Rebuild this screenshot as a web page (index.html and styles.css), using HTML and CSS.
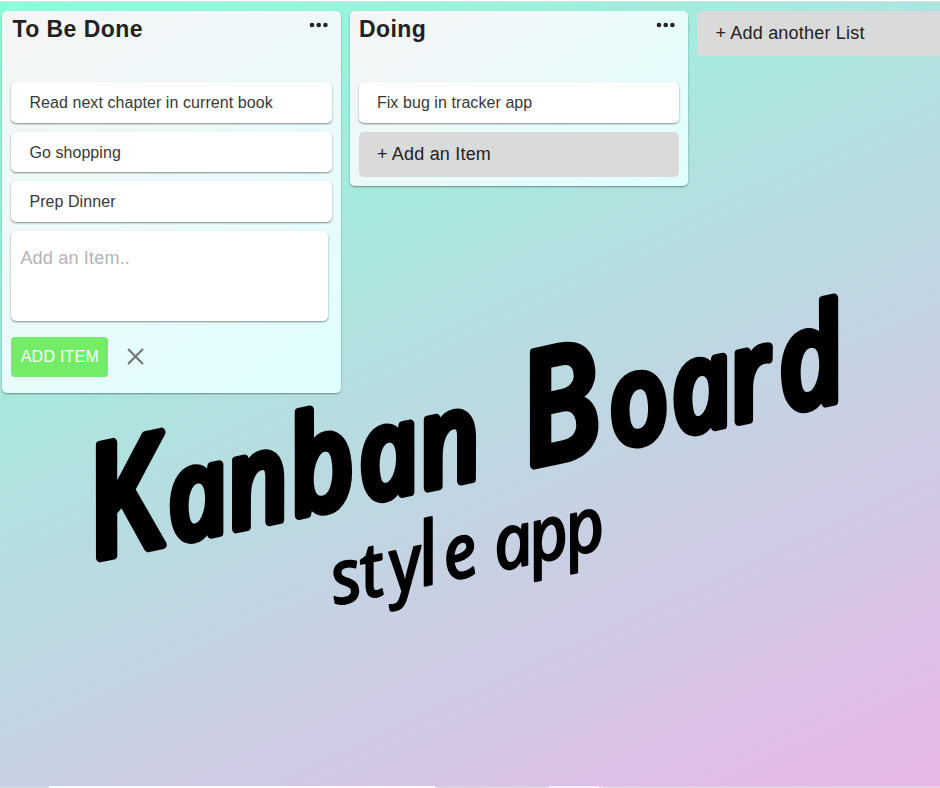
FILE: index.html
```html
<!DOCTYPE html>
<html lang="en">
<head>
<meta charset="utf-8">
<title>Kanban Board</title>
<link rel="stylesheet" href="styles.css">
</head>
<body>
<main class="board">
  <section class="list">
    <header class="list-header"><h2>To Be Done</h2><svg class="dots" viewBox="0 0 20 6"><circle cx="3" cy="3" r="2.3"/><circle cx="9.7" cy="3" r="2.3"/><circle cx="16.4" cy="3" r="2.3"/></svg></header>
    <div class="card">Read next chapter in current book</div>
    <div class="card">Go shopping</div>
    <div class="card">Prep Dinner</div>
    <div class="entry">Add an Item..</div>
    <div class="actions"><button class="add">ADD ITEM</button><svg class="close" viewBox="0 0 16 16"><path d="M1 1 15 15M15 1 1 15"/></svg></div>
  </section>
  <section class="list doing">
    <header class="list-header"><h2>Doing</h2><svg class="dots" viewBox="0 0 20 6"><circle cx="3" cy="3" r="2.3"/><circle cx="9.7" cy="3" r="2.3"/><circle cx="16.4" cy="3" r="2.3"/></svg></header>
    <div class="card">Fix bug in tracker app</div>
    <div class="new">+ Add an Item</div>
  </section>
  <div class="new new-list">+ Add another List</div>
</main>
<svg class="title" viewBox="0 0 940 788">
  <g class="name">
    <text transform="translate(90 560) skewY(-12) scale(.82 1) skewX(12)" x="6 102 175 251 335 409">K<tspan class="low">an</tspan><tspan class="tall">b</tspan><tspan class="low">an</tspan></text>
    <text transform="translate(516 469) skewY(-12) scale(.82 1) skewX(12)" x="16 121 197 268 328">B<tspan class="low">oar</tspan><tspan class="tall">d</tspan></text>
  </g>
  <g class="sub">
    <text transform="translate(334 605) skewY(-12) scale(.88 1) skewX(12)" x="2 35 68 101 129">st<tspan>y</tspan><tspan class="stem">l</tspan>e</text>
    <text transform="translate(497 571) skewY(-12) scale(.88 1) skewX(12)" x="1 41 82">app</text>
  </g>
</svg>
<footer class="taskbar"><i class="search"></i><i class="task"></i><i class="tick"></i></footer>
</body>
</html>
```
FILE: styles.css
```css
* { box-sizing: border-box; }
body {
  margin: 0;
  height: 788px;
  overflow: hidden;
  display: flex;
  flex-direction: column;
  font-family: "Liberation Sans", Arial, sans-serif;
  color: #222;
  background: linear-gradient(155deg, #8affdb, #e9b7e7);
  border-top: 1px solid #fff;
}
.board {
  flex: 1;
  display: flex;
  align-items: flex-start;
  gap: 9px;
  padding: 9.4px 0 0 2.4px;
  border-top: 1px solid #d3e5e0;
}
.list {
  flex: none;
  width: 338.5px;
  height: 382px;
  padding: 0 9px;
  border-radius: 5px;
  background: linear-gradient(145deg, #f6f5f6, #e0ffff);
  box-shadow: 0 1px 2px rgba(0, 0, 0, .4);
}
.doing { height: 174.5px; }
.list-header { height: 71px; display: flex; justify-content: space-between; }
h2 { margin: 5px 0 0 1px; font-size: 23px; line-height: 26px; letter-spacing: .45px; }
.doing h2 { margin-left: 0; }
.dots { width: 20px; height: 6px; margin: 10.5px 3px 0 0; fill: #222; }
.card {
  height: 40.5px;
  margin-bottom: 9px;
  padding-left: 18px;
  border-radius: 5px;
  background: #fff;
  box-shadow: 0 1px 2px rgba(0, 0, 0, .45);
  font-size: 16px;
  line-height: 42px;
  letter-spacing: .07px;
  color: #383838;
}
.entry {
  width: 317px;
  height: 90px;
  padding: 17px 9px;
  border-radius: 5px;
  background: #fff;
  box-shadow: 0 1px 2px rgba(0, 0, 0, .45);
  font-size: 18px;
  line-height: 21px;
  letter-spacing: .2px;
  color: #b3b3b3;
}
.actions { display: flex; align-items: center; gap: 19px; margin-top: 16px; }
.add {
  width: 97px;
  height: 40px;
  padding: 1px 0 0;
  border: 0;
  border-radius: 4px;
  background: #74ec67;
  color: #fff;
  font: 16px "Liberation Sans", Arial, sans-serif;
  letter-spacing: .25px;
}
.close { width: 17px; height: 17px; fill: none; stroke: #707777; stroke-width: 2; }
.new {
  height: 45px;
  padding-left: 18px;
  border-radius: 5px;
  background: #dadada;
  font-size: 18px;
  line-height: 44px;
  letter-spacing: .2px;
}
.new-list { flex: 1; border-radius: 5px 0 0 5px; }
.title { position: absolute; inset: 0; width: 940px; height: 788px; pointer-events: none; }
.title text {
  font-family: "Noto Sans", "Open Sans", sans-serif;
  font-style: italic;
  stroke: #000;
  stroke-linejoin: round;
}
.name { font-size: 158px; font-weight: 500; stroke-width: 9; }
.low { font-size: 126px; }
.tall { font-size: 136px; }
.sub { font-size: 76px; font-weight: 400; stroke-width: 2.5; }
.stem { font-size: 88px; }
.taskbar { flex: none; height: 2px; display: flex; background: #d9d7da; }
.search { width: 386px; margin-left: 49px; background: #fff; }
.task { width: 50px; margin-left: 114px; background: #f4f1f4; }
.tick { width: 3px; margin-left: 2px; background: #e8e6e8; }
```
